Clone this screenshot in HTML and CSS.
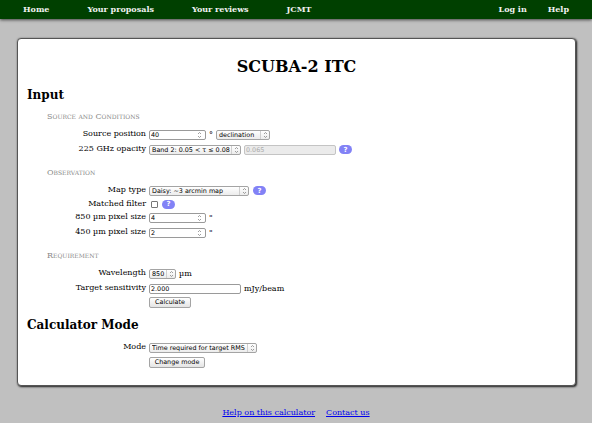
FILE: index.html
```html
<!DOCTYPE html>
<html lang="en">
<head>
<meta charset="utf-8">
<title>SCUBA-2 ITC</title>
<link rel="stylesheet" href="styles.css">
</head>
<body>
<nav class="topnav">
  <ul class="nav-left">
    <li><a href="#">Home</a></li>
    <li><a href="#">Your proposals</a></li>
    <li><a href="#">Your reviews</a></li>
    <li><a href="#">JCMT</a></li>
  </ul>
  <ul class="nav-right">
    <li><a href="#">Log in</a></li>
    <li><a href="#">Help</a></li>
  </ul>
</nav>

<main class="card">
  <h1 class="title">SCUBA-2 ITC</h1>

  <h2 class="heading">Input</h2>

  <h3 class="group">Source and Conditions</h3>
  <div class="row">
    <label class="lbl">Source position</label>
    <div class="ctl">
      <span class="field w57"><input type="text" value="40"><svg class="spin" viewBox="0 0 5 8"><path d="M1 3 L2.5 1.5 L4 3 M1 5 L2.5 6.5 L4 5"/></svg></span>
      <span class="unit">°</span>
      <span class="dropdown w54"><select><option>declination</option></select><span class="arrow"><svg viewBox="0 0 5 8"><path d="M1 3 L2.5 1.5 L4 3 M1 5 L2.5 6.5 L4 5"/></svg></span></span>
    </div>
  </div>
  <div class="row">
    <label class="lbl">225 GHz opacity</label>
    <div class="ctl">
      <span class="dropdown w92"><select><option>Band 2: 0.05 &lt; τ ≤ 0.08</option></select><span class="arrow"><svg viewBox="0 0 5 8"><path d="M1 3 L2.5 1.5 L4 3 M1 5 L2.5 6.5 L4 5"/></svg></span></span>
      <span class="field disabled w92"><input type="text" value="0.065" disabled></span>
      <span class="help">?</span>
    </div>
  </div>

  <h3 class="group group-gap">Observation</h3>
  <div class="row row-first">
    <label class="lbl">Map type</label>
    <div class="ctl">
      <span class="dropdown w100"><select><option>Daisy: ~3 arcmin map</option></select><span class="arrow"><svg viewBox="0 0 5 8"><path d="M1 3 L2.5 1.5 L4 3 M1 5 L2.5 6.5 L4 5"/></svg></span></span>
      <span class="help help-wide">?</span>
    </div>
  </div>
  <div class="row short">
    <label class="lbl">Matched filter</label>
    <div class="ctl">
      <input class="check" type="checkbox">
      <span class="help help-wide">?</span>
    </div>
  </div>
  <div class="row">
    <label class="lbl">850 µm pixel size</label>
    <div class="ctl">
      <span class="field w57"><input type="text" value="4"><svg class="spin" viewBox="0 0 5 8"><path d="M1 3 L2.5 1.5 L4 3 M1 5 L2.5 6.5 L4 5"/></svg></span>
      <span class="unit">"</span>
    </div>
  </div>
  <div class="row">
    <label class="lbl">450 µm pixel size</label>
    <div class="ctl">
      <span class="field w57"><input type="text" value="2"><svg class="spin" viewBox="0 0 5 8"><path d="M1 3 L2.5 1.5 L4 3 M1 5 L2.5 6.5 L4 5"/></svg></span>
      <span class="unit">"</span>
    </div>
  </div>

  <h3 class="group group-gap">Requirement</h3>
  <div class="row">
    <label class="lbl">Wavelength</label>
    <div class="ctl">
      <span class="dropdown w27"><select><option>850</option></select><span class="arrow"><svg viewBox="0 0 5 8"><path d="M1 3 L2.5 1.5 L4 3 M1 5 L2.5 6.5 L4 5"/></svg></span></span>
      <span class="unit">µm</span>
    </div>
  </div>
  <div class="row">
    <label class="lbl">Target sensitivity</label>
    <div class="ctl">
      <span class="field w92"><input type="text" value="2.000"></span>
      <span class="unit">mJy/beam</span>
    </div>
  </div>
  <div class="row btnrow">
    <span></span>
    <div class="ctl"><button class="btn w42" type="button">Calculate</button></div>
  </div>

  <h2 class="heading heading-mode">Calculator Mode</h2>
  <div class="row row-mode">
    <label class="lbl">Mode</label>
    <div class="ctl">
      <span class="dropdown w108"><select><option>Time required for target RMS</option></select><span class="arrow"><svg viewBox="0 0 5 8"><path d="M1 3 L2.5 1.5 L4 3 M1 5 L2.5 6.5 L4 5"/></svg></span></span>
    </div>
  </div>
  <div class="row btnrow2">
    <span></span>
    <div class="ctl"><button class="btn w56" type="button">Change mode</button></div>
  </div>
</main>

<footer class="footer">
  <a href="#">Help on this calculator</a>
  <a href="#">Contact us</a>
</footer>
</body>
</html>
```

FILE: styles.css
```css
* { box-sizing: border-box; }

html { background: #c0c0c0; }

body {
  margin: 0;
  font-family: "DejaVu Serif", serif;
  font-size: 8px;
  color: #000;
}

/* top navigation */
.topnav {
  display: flex;
  justify-content: space-between;
  height: 19px;
  background: #004000;
  box-shadow: 0 1px 3px #444;
}
.topnav ul {
  list-style: none;
  margin: 0;
  display: flex;
}
.nav-left { padding: 0 0 0 4px; }
.nav-left a { padding: 0 19px; }
.nav-right { padding: 0 13px 0 0; gap: 1px; }
.nav-right a { padding: 0 10px; }
.topnav a {
  display: block;
  line-height: 19px;
  color: #f2f2f2;
  font-weight: bold;
  text-decoration: none;
}

/* card */
.card {
  margin: 19px 16px 0 17px;
  background: #fff;
  border: 1px solid #555;
  border-radius: 4px;
  box-shadow: 1px 1px 2px #222, 0 0 2px #888;
  padding: 19px 9px 15px;
}

.title {
  margin: 0;
  font-size: 16px;
  line-height: 18px;
  text-align: center;
  font-weight: bold;
}

.heading {
  margin: 12px 0 0;
  font-size: 12px;
  line-height: 14px;
  font-weight: bold;
}
.heading-mode { margin-top: 10px; }

.group {
  margin: 10px 0 5px 20px;
  font-size: 8px;
  line-height: 10px;
  font-weight: normal;
  font-variant: small-caps;
  color: #888;
}
.group-gap { margin-top: 11px; margin-bottom: 5px; }

/* form rows */
.row {
  display: grid;
  grid-template-columns: 119px auto;
  column-gap: 3px;
  align-items: center;
  height: 15px;
}
.row.short { height: 12px; }
.row.btnrow { height: 12px; }
.row.btnrow2 { height: 15px; }
.row-first { margin-top: 1px; }
.row-mode { margin-top: 8px; }

.lbl {
  text-align: right;
  line-height: 9px;
  margin-bottom: 2px;
  white-space: nowrap;
}

.ctl {
  display: flex;
  align-items: center;
  gap: 3px;
}

.unit { line-height: 9px; margin-bottom: 1px; }

/* text inputs */
.field {
  display: flex;
  align-items: center;
  height: 10px;
  border: 1px solid #9a9a9a;
  border-radius: 2px;
  background: #fff;
}
.field input {
  border: 0;
  outline: 0;
  padding: 0 0 0 1px;
  margin: 0;
  font: 6.4px "DejaVu Sans", sans-serif;
  height: 8px;
  line-height: 8px;
  flex: 1;
  min-width: 0;
  background: transparent;
  color: #000;
}
.field.disabled {
  background: #ebebeb;
  border-color: #c4c4c4;
}
.field.disabled input { color: #aaa; }

.spin {
  width: 5px;
  height: 8px;
  margin-right: 3px;
  flex: none;
}
.spin path, .arrow path {
  fill: none;
  stroke: #777;
  stroke-width: 0.7;
}

/* selects */
.dropdown {
  display: flex;
  align-items: center;
  height: 10px;
  border: 1px solid #a4a4a4;
  border-radius: 2px;
  background: linear-gradient(#ffffff, #ececec);
}
.dropdown select {
  appearance: none;
  -webkit-appearance: none;
  border: 0;
  outline: 0;
  background: transparent;
  font: 6.4px "DejaVu Sans", sans-serif;
  padding: 0 0 0 2px;
  margin: 0;
  height: 8px;
  line-height: 8px;
  flex: 1;
  min-width: 0;
  color: #000;
}
.dropdown .arrow {
  display: flex;
  align-items: center;
  justify-content: center;
  width: 9px;
  height: 8px;
  border-left: 1px solid #cfcfcf;
  flex: none;
}
.dropdown .arrow svg { width: 5px; height: 8px; }

.w27 { width: 27px; }
.w42 { width: 42px; }
.w54 { width: 54px; }
.w56 { width: 56px; }
.w57 { width: 57px; }
.w92 { width: 92px; }
.w100 { width: 100px; }
.w108 { width: 108px; }

/* checkbox */
.check {
  appearance: none;
  -webkit-appearance: none;
  width: 7px;
  height: 7px;
  margin: 0 0 0 2px;
  border: 1px solid #777;
  border-radius: 1px;
  background: #fff;
}

/* help bubble */
.help {
  display: inline-flex;
  align-items: center;
  justify-content: center;
  width: 13px;
  height: 9px;
  border-radius: 5px;
  background: #8282f6;
  color: #fff;
  font: bold 7px "DejaVu Sans", sans-serif;
}
.help-wide { margin-left: 1px; }

/* buttons */
.btn {
  height: 11px;
  padding: 0;
  font: 6.4px "DejaVu Sans", sans-serif;
  line-height: 9px;
  border: 1px solid #a4a4a4;
  border-radius: 2px;
  background: linear-gradient(#ffffff, #e4e4e4);
  color: #000;
  text-align: center;
}

/* footer */
.footer {
  display: flex;
  justify-content: center;
  gap: 11px;
  margin-top: 22px;
  line-height: 10px;
}
.footer a { color: #0000ee; }
```
